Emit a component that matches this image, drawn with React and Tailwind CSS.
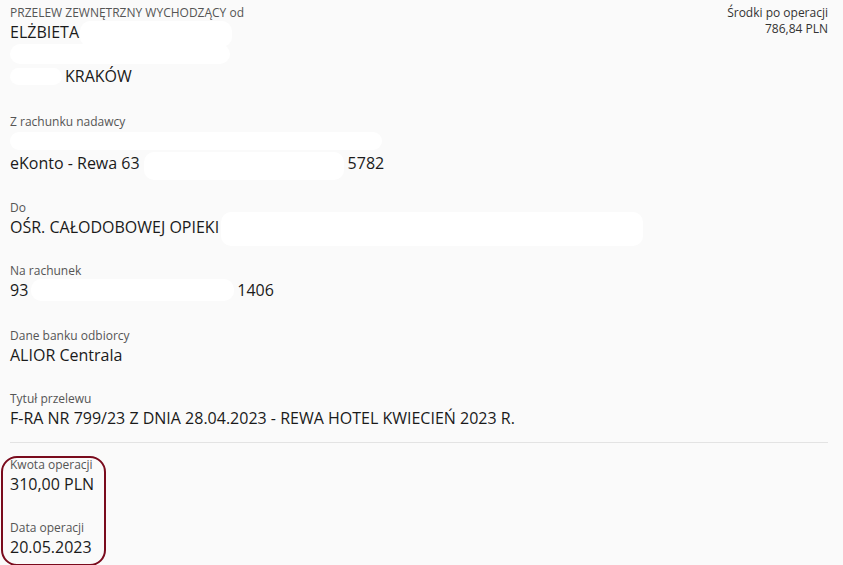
/**
 * App.jsx — szczegóły przelewu wychodzącego (widok historii operacji).
 */
function Blob({ className }) {
  return <span className={`inline-block bg-white rounded-[10px] align-middle ${className}`} />
}

function Field({ label, children, className = '' }) {
  return (
    <div className={className}>
      <div className="text-[12px] leading-[16px] text-[#555]">{label}</div>
      <div className="text-[16px] leading-[22px] text-[#1a1a1a]">{children}</div>
    </div>
  )
}

export default function App() {
  return (
    <div
      className="relative w-[843px] h-[565px] overflow-hidden bg-[#fafafa] pl-[10px] pr-[15px] pt-[5px]"
      style={{ fontFamily: '"Open Sans", "Noto Sans", sans-serif' }}
    >
      <div className="flex justify-between">
        <Field label="PRZELEW ZEWNĘTRZNY WYCHODZĄCY od">
          <div className="flex items-center h-[22px]">
            ELŻBIETA
            <Blob className="w-[152px] h-[26px] ml-[1px] mt-[4px]" />
          </div>
          <div className="h-[22px] flex items-center">
            <Blob className="w-[220px] h-[20px]" />
          </div>
          <div className="flex items-center h-[22px]">
            <Blob className="w-[52px] h-[17px] mr-[3px]" />
            KRAKÓW
          </div>
        </Field>
        <div className="text-right text-[12px] leading-[16px] text-[#333]">
          <div>Środki po operacji</div>
          <div>786,84 PLN</div>
        </div>
      </div>

      <Field label="Z rachunku nadawcy" className="mt-[27px]">
        <div className="h-[22px] flex items-center">
          <Blob className="w-[372px] h-[18px]" />
        </div>
        <div className="flex items-center h-[22px]">
          eKonto - Rewa 63
          <Blob className="w-[200px] h-[28px] mx-[4px] mt-[6px]" />
          5782
        </div>
      </Field>

      <Field label="Do" className="mt-[26px]">
        <div className="flex items-center h-[22px]">
          OŚR. CAŁODOBOWEJ OPIEKI
          <Blob className="w-[422px] h-[34px] ml-[2px] mt-[4px]" />
        </div>
      </Field>

      <Field label="Na rachunek" className="mt-[25px]">
        <div className="flex items-center h-[22px]">
          93
          <Blob className="w-[203px] h-[22px] mx-[3px]" />
          1406
        </div>
      </Field>

      <Field label="Dane banku odbiorcy" className="mt-[27px]">
        ALIOR Centrala
      </Field>

      <Field label="Tytuł przelewu" className="mt-[25px]">
        F-RA NR 799/23 Z DNIA 28.04.2023 - REWA HOTEL KWIECIEŃ 2023 R.
      </Field>

      <div className="mt-[13px] border-t border-[#e3e3e3]" />

      <Field label="Kwota operacji" className="mt-[14px]">
        310,00 PLN
      </Field>

      <Field label="Data operacji" className="mt-[25px]">
        20.05.2023
      </Field>

      <div className="absolute left-[1px] top-[456px] w-[105px] h-[110px] rounded-[16px] border-[2.5px] border-[#7a0b1d]" />
    </div>
  )
}
